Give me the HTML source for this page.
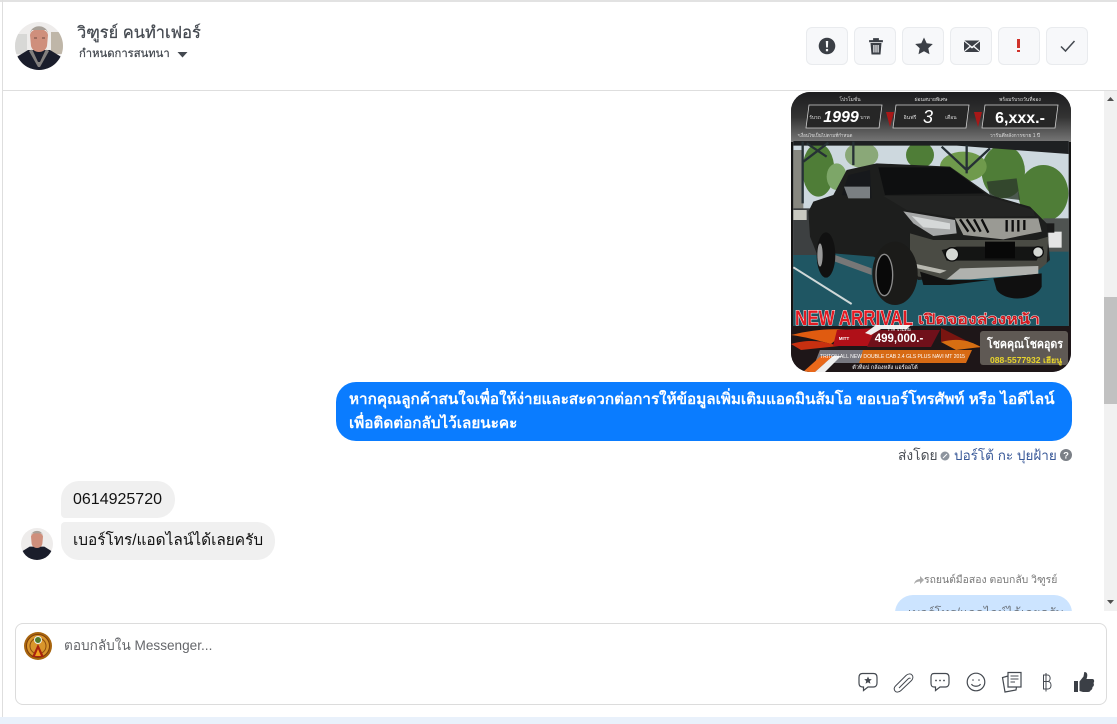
<!DOCTYPE html>
<html><head><meta charset="utf-8"><style>
*{box-sizing:border-box}
html,body{margin:0;padding:0;width:1117px;height:724px;overflow:hidden;background:#fff;font-family:"Liberation Sans","Noto Sans CJK SC",sans-serif}
.a{position:absolute;white-space:nowrap}
.btn{position:absolute;top:27px;width:42px;height:38px;background:#f7f8fa;border:1px solid #e9ebee;border-radius:6px}
.btn svg,.ic{position:absolute}
.b{position:absolute;border-radius:18px;font-size:16px;line-height:24px;white-space:nowrap}
</style></head><body>
<div class="a" style="left:0;top:0;width:1117px;height:2px;background:#e2e2e2"></div>
<div class="a" style="left:2px;top:0;width:1px;height:724px;background:#dedede"></div>
<div class="a" style="left:3px;top:90px;width:1114px;height:1px;background:#dedede"></div>

<svg class="a" style="left:15px;top:22px" width="48" height="48" viewBox="0 0 48 48"><defs><clipPath id="c1"><circle cx="24" cy="24" r="24"/></clipPath></defs><g clip-path="url(#c1)"><rect width="48" height="48" fill="#eeeceb"/><rect x="36" y="10" width="12" height="22" fill="#bfb6a8"/><rect x="0" y="12" width="12" height="20" fill="#d8d8d6"/><path d="M0 44V36L13 28H35L48 36V48H0Z" fill="#1a1d2b"/><path d="M15 13C16 5 32 5 33 13L32 24C30 32 18 32 16 24Z" fill="#cf8f7c"/><path d="M15 11C17 2 31 2 33 11L31 8H17Z" fill="#a8a098"/><path d="M17 27L23 40L25 40L31 27L34 29L25 45H23L14 29Z" fill="#c8c2b4" opacity=".6"/><path d="M19 16H22M27 16H30" stroke="#6e4a40"/></g></svg>

<div class="a" style="left:77px;top:23px;font-size:16.400px;line-height:20px;color:#444950;-webkit-text-stroke:.25px #444950">วิฑูรย์ คนทำเฟอร์</div>
<div class="a" style="left:79px;top:46px;font-size:11.250px;line-height:16px;color:#444950;-webkit-text-stroke:.25px #444950">กำหนดการสนทนา</div>
<svg class="ic" style="left:177px;top:51px" width="11" height="7"><path d="M0.500 1H10.500L5.500 6.500Z" fill="#444950"/></svg>

<div class="btn" style="left:806px"><svg style="left:11px;top:9px" width="18" height="18" viewBox="0 0 18 18"><path fill-rule="evenodd" d="M9 .7A8.300 8.300 0 1 0 9 17.300A8.300 8.300 0 1 0 9 .7Z M7.800 4H10.200L9.900 10.500H8.100Z M7.900 12H10.100V14.200H7.900Z" fill="#3b3f46"/></svg></div>
<div class="btn" style="left:854px"><svg style="left:13px;top:9px" width="16" height="18" viewBox="0 0 16 18"><path d="M1.500 3.500H14.500V4.800H1.500Z M5.500 3.500V1.500H10.500V3.500" fill="#3b3f46" stroke="#3b3f46" stroke-width=".8"/><path fill-rule="evenodd" d="M2.500 6H13.500L12.500 17.500H3.500Z M5.300 8V15.500H6.500V8Z M7.400 8V15.500H8.600V8Z M9.500 8V15.500H10.700V8Z" fill="#3b3f46"/></svg></div>
<div class="btn" style="left:902px"><svg style="left:12px;top:9px" width="18" height="18" viewBox="0 0 18 18"><path d="M9 .5L11.700 6.200L17.800 7L13.300 11.200L14.500 17.300L9 14.300L3.500 17.300L4.700 11.200L.2 7L6.300 6.200Z" fill="#3b3f46"/></svg></div>
<div class="btn" style="left:950px"><svg style="left:12px;top:11px" width="18" height="14" viewBox="0 0 18 14"><path d="M1.500 1.500H16.500L9 7.500Z M1 2.500L6.500 7L1 12Z M17 2.500L11.500 7L17 12Z M1.500 13L7.300 8.200L9 9.500L10.700 8.200L16.500 13Z" fill="#3b3f46"/></svg></div>
<div class="btn" style="left:998px"><div class="a" style="left:18px;top:11px;width:3px;height:9px;background:#d0332b"></div><div class="a" style="left:18px;top:21.500px;width:3px;height:2.500px;background:#d0332b"></div></div>
<div class="btn" style="left:1046px"><svg style="left:12px;top:11px" width="18" height="14" viewBox="0 0 18 14"><path d="M2 7.500L6.500 12L15.500 2" fill="none" stroke="#444950" stroke-width="1.500"/></svg></div>

<svg class="a" style="left:791px;top:92px" width="280" height="280" viewBox="0 0 280 280">
<defs><clipPath id="ci"><rect width="280" height="280" rx="19"/></clipPath><linearGradient id="gh" x1="0" y1="0" x2="0" y2="1"><stop offset="0" stop-color="#1d1d1f"/><stop offset=".5" stop-color="#333"/><stop offset="1" stop-color="#777"/></linearGradient></defs>
<g clip-path="url(#ci)">
<rect width="280" height="280" fill="#141414"/><rect width="280" height="50" fill="url(#gh)"/>
<g fill="#262626" stroke="#d0d0d0" stroke-width=".8"><path d="M18 13H91L88 36H15Z"/><path d="M105 13H178L175 36H102Z"/><path d="M194 13H267L264 36H191Z"/></g>
<path d="M95 20H103L99 35Z M183 20H191L187 35Z" fill="#a81818"/>
<g fill="#ddd" font-size="5" text-anchor="middle"><text x="59" y="9">โปรโมชั่น</text><text x="140" y="9">ผ่อนสบายพิเศษ</text><text x="229" y="9">พร้อมรับรถวันที่จอง</text><text x="24" y="27">รับรถ</text><text x="74" y="27">บาท</text><text x="119" y="27">อินฟรี</text><text x="160" y="27">เดือน</text><text x="34" y="45" font-size="4.500">*เงื่อนไขเป็นไปตามที่กำหนด</text><text x="224" y="45">วารันตีหลังการขาย 1 ปี</text></g>
<text x="50" y="30" fill="#fff" font-size="16" font-weight="700" font-style="italic" text-anchor="middle">1999</text>
<text x="137" y="31" fill="#fff" font-size="18" font-style="italic" text-anchor="middle">3</text>
<text x="229" y="31" fill="#fff" font-size="16" font-weight="700" text-anchor="middle">6,xxx.-</text>

<g transform="translate(-1,48) scale(.33333)">
<rect x="10" y="5" width="826" height="560" fill="#cdd8de"/>
<rect x="10" y="330" width="826" height="235" fill="#1f5663"/>
<g fill="#4f7d37"><ellipse cx="85" cy="90" rx="48" ry="80"/><ellipse cx="390" cy="45" rx="42" ry="40"/><ellipse cx="215" cy="45" rx="50" ry="38" fill="#8aa878"/><ellipse cx="640" cy="95" rx="65" ry="80"/><ellipse cx="760" cy="160" rx="75" ry="85"/><ellipse cx="520" cy="80" rx="70" ry="45" fill="#6f9a4c"/><ellipse cx="140" cy="110" rx="30" ry="40" fill="#7da668"/></g>
<rect x="10" y="30" width="30" height="180" fill="#87877f"/><rect x="10" y="205" width="80" height="140" fill="#3d4041"/><rect x="10" y="210" width="40" height="30" fill="#c8c8c0"/>
<path d="M590 125L680 115L690 180L600 170Z" fill="#2c3a2a" opacity=".8"/>
<rect x="760" y="235" width="76" height="100" fill="#4f5351"/><rect x="775" y="275" width="40" height="48" fill="#e4e4e4"/><rect x="765" y="250" width="28" height="28" fill="#1a1a1a"/>
<path d="M10 3H836V42L500 17H10Z" fill="#1e2022"/>
<g stroke="#263035" fill="none" stroke-width="7"><path d="M38 5V190M190 5V75"/><path d="M40 65L115 8M50 10L110 50M530 15V100M455 20L530 90L600 25"/></g>
<path d="M10 382L185 492" stroke="#cfd8d8" stroke-width="6"/>
<path d="M55 215L70 185L130 165L170 90L260 70L480 80L600 165L720 200L770 250L780 360L740 395L385 420L350 395L250 350L130 340L80 340L60 290Z" fill="#1d1e1d"/>
<path d="M265 82L480 82L585 160L285 165Z" fill="#0e0f10"/>
<path d="M155 165L175 105L240 90L245 175Z" fill="#17191c"/><path d="M162 140H240V175H175Z" fill="#7a7f82"/>
<path d="M280 168H590L730 210L735 228L495 232L350 210Z" fill="#232423"/>
<path d="M340 214L495 240L500 280L430 288L370 250Z" fill="#a6a8a8"/><path d="M365 228L480 250L480 268L400 262Z" fill="#d5d8d8"/>
<path d="M495 235H745L755 275L640 298L520 285Z" fill="#9a9a94"/>
<g stroke="#0d0d0d" stroke-width="7"><path d="M510 238L535 275M530 238L555 275M552 238L572 275M575 238L595 278M650 240V275M668 240V275M685 240V275M703 240V270"/></g>
<path d="M360 280L430 300H740L775 290L770 370L740 395L480 420L385 410L360 370Z" fill="#4a4b44"/>
<path d="M455 330L500 320H760L740 362H470Z" fill="#141514"/><rect x="585" y="305" width="90" height="50" fill="#080808"/>
<circle cx="486" cy="343" r="20" fill="#d5d8d4" stroke="#0c0c0c" stroke-width="4"/><circle cx="744" cy="336" r="16" fill="#d5d8d4" stroke="#0c0c0c" stroke-width="4"/>
<path d="M470 418L510 385L745 378V402L540 418Z" fill="#b0b2ae"/><path d="M370 370L470 392L450 400L370 382Z" fill="#b8b8b0"/>
<path d="M135 345L245 385V405L135 365Z" fill="#777"/>
<ellipse cx="108" cy="345" rx="28" ry="68" fill="#111"/><ellipse cx="90" cy="345" rx="8" ry="35" fill="#999"/>
<ellipse cx="315" cy="400" rx="68" ry="95" fill="#1b1b19"/><ellipse cx="283" cy="405" rx="25" ry="62" fill="#090909" stroke="#8b8b8b" stroke-width="4"/>
<path d="M610 415L755 400V440C740 480 650 490 620 450Z" fill="#101010"/>
<path d="M390 395L470 420H600L480 435H400Z" fill="#111"/>
</g>

<rect x="0" y="234" width="280" height="46" fill="#1e1618"/>
<path d="M0 243C20 238 40 236 56 238L40 252C25 248 15 245 0 243Z" fill="#e05b10"/><path d="M0 252C20 246 35 250 48 254L10 258Z" fill="#c83010"/>
<path d="M150 236L190 256L150 250Z" fill="#7a1510"/><path d="M150 250C170 245 180 250 190 255L165 258Z" fill="#d66e12"/>
<path d="M46 238L90 236L84 254H42Z" fill="#b01018"/><path d="M84 238H149L140 255H76Z" fill="#70101a"/>
<path d="M74 241L85 233H120L116 237H90L80 243Z" fill="#eee"/>
<path d="M29 258H181L175 271H24Z" fill="#d76a14"/><path d="M29 258H72L68 271H24Z" fill="#77777f"/>
<path d="M12 280L30 264H42L24 280Z" fill="#e9681a"/><path d="M24 280L42 264H50L34 280Z" fill="#eee"/>
<rect x="189" y="239" width="88" height="34" rx="3" fill="#5f5954"/>
<text x="4" y="233" fill="#e31b23" stroke="#fff" stroke-width="1" paint-order="stroke" font-size="21" font-weight="700" textLength="118" lengthAdjust="spacingAndGlyphs">NEW ARRIVAL</text>
<text x="127" y="232" fill="#d11a20" stroke="#fff" stroke-width=".8" paint-order="stroke" font-size="14" font-weight="700" textLength="122" lengthAdjust="spacingAndGlyphs">เปิดจองล่วงหน้า</text>
<text x="108" y="239" fill="#fff" font-size="4.500" text-anchor="middle">ราคาเริ่มต้น</text>
<text x="53" y="248" fill="#fff" font-size="4.500" font-weight="700" text-anchor="middle">MITT</text>
<text x="108" y="250" fill="#fff" font-size="11.500" font-weight="700" text-anchor="middle">499,000.-</text>
<text x="196" y="256" fill="#fff" font-size="12" font-weight="700" textLength="76" lengthAdjust="spacingAndGlyphs">โชคคุณโชคอุดร</text>
<text x="199" y="271" fill="#e9d52c" font-size="8" font-weight="700" textLength="72" lengthAdjust="spacingAndGlyphs">088-5577932 เฮียนู</text>
<text x="29" y="266" fill="#fff" font-size="5" textLength="145" lengthAdjust="spacingAndGlyphs">TRITON ALL NEW DOUBLE CAB 2.4 GLS PLUS NAVI MT 2015</text>
<text x="94" y="277" fill="#fff" font-size="5.500" text-anchor="middle">ตัวท็อป กล้องหลัง แอร์ออโต้</text>
</g></svg>

<div class="b" style="left:336px;top:382px;width:736px;height:59px;padding:6px 13px;background:#0a7cff;color:#fff;font-weight:700;font-size:15.250px;border-radius:20px">หากคุณลูกค้าสนใจเพื่อให้ง่ายและสะดวกต่อการให้ข้อมูลเพิ่มเติมแอดมินส้มโอ ขอเบอร์โทรศัพท์ หรือ ไอดีไลน์<br>เพื่อติดต่อกลับไว้เลยนะคะ</div>

<div class="a" style="left:898px;top:447px;font-size:13.800px;line-height:18px;color:#4b4f56">ส่งโดย</div>
<svg class="ic" style="left:940px;top:451px" width="10" height="10"><circle cx="5" cy="5" r="4.500" fill="#8d949e"/><path d="M3 7L7 3" stroke="#fff"/></svg>
<div class="a" style="left:954px;top:447px;font-size:13.500px;line-height:18px;color:#385898">ปอร์โต้ กะ ปุยฝ้าย</div>
<svg class="ic" style="left:1060px;top:449px" width="12" height="12"><circle cx="6" cy="6" r="6" fill="#7b8087"/><text x="6" y="9.500" font-size="9.500" font-weight="700" fill="#fff" text-anchor="middle">?</text></svg>

<div class="b" style="left:61px;top:481px;width:114px;height:37px;padding:7px 12px;background:#f0f0f0;color:#111;border-radius:18px 18px 18px 4px">0614925720</div>
<div class="b" style="left:61px;top:522px;width:214px;height:38px;padding:7px 12px;background:#f0f0f0;color:#111;font-size:15.400px;border-radius:4px 18px 18px 18px">เบอร์โทร/แอดไลน์ได้เลยครับ</div>
<svg class="a" style="left:21px;top:528px" width="32" height="32" viewBox="0 0 48 48"><defs><clipPath id="c2"><circle cx="24" cy="24" r="24"/></clipPath></defs><g clip-path="url(#c2)"><rect width="48" height="48" fill="#eeeceb"/><path d="M0 44V36L13 28H35L48 36V48H0Z" fill="#1a1d2b"/><path d="M15 13C16 5 32 5 33 13L32 24C30 32 18 32 16 24Z" fill="#cf8f7c"/><path d="M15 11C17 2 31 2 33 11L31 8H17Z" fill="#a8a098"/></g></svg>

<svg class="ic" style="left:914px;top:576px" width="10" height="9"><path d="M0 8C1 4 4 3 6 3V0L10 4L6 8V5.500C4 5.500 2 6 0 8Z" fill="#aaa"/></svg>
<div class="a" style="left:924px;top:573px;font-size:10.400px;line-height:16px;color:#777">รถยนต์มือสอง ตอบกลับ วิฑูรย์</div>
<div class="a" style="left:895px;top:595px;width:177px;height:16px;overflow:hidden"><div class="b" style="left:0;top:0;width:177px;height:36px;padding:6px 13px;background:#cce4ff;color:#6f7780;font-size:12.600px;border-radius:18px">เบอร์โทร/แอดไลน์ได้เลยครับ</div></div>

<div class="a" style="left:1104px;top:91px;width:13px;height:520px;background:#f1f1f1"></div>
<div class="a" style="left:1104px;top:297px;width:13px;height:107px;background:#c1c1c1"></div>
<svg class="ic" style="left:1106px;top:96px" width="9" height="6"><path d="M4.500 1L8 5H1Z" fill="#505050"/></svg>
<svg class="ic" style="left:1106px;top:599px" width="9" height="6"><path d="M1 1H8L4.500 5Z" fill="#505050"/></svg>

<div class="a" style="left:15px;top:623px;width:1092px;height:82px;border:1px solid #dcdcdc;border-radius:8px;background:#fff"></div>
<svg class="a" style="left:24px;top:632px" width="28" height="28" viewBox="0 0 28 28"><circle cx="14" cy="14" r="14" fill="#a8650f"/><circle cx="14" cy="14" r="11.500" fill="#d9962c" stroke="#7d3d0a"/><circle cx="14" cy="14" r="8" fill="none" stroke="#8e4e10"/><circle cx="14" cy="8" r="3.500" fill="#4f7a2a" stroke="#eee"/><path d="M14 12L20 25H8Z" fill="#a8230f"/><path d="M14 17L17 24H11Z" fill="#f0a020"/></svg>
<div class="a" style="left:64px;top:637px;font-size:13.600px;line-height:18px;color:#65676b">ตอบกลับใน Messenger...</div>

<svg class="a" style="left:856px;top:670px" width="240" height="26" viewBox="0 0 240 26" fill="none" stroke="#444950" stroke-width="1.200">
<path d="M6.500 3.500H17.500C20 3.500 21 5 21 7.500V13C21 15.500 19.500 17 17.500 17H12L7.500 20.500V17H6.500C4 17 3 15.500 3 13V7.500C3 5 4 3.500 6.500 3.500Z"/>
<path d="M12 6.500L13.100 9L15.800 9.300L13.800 11L14.400 13.700L12 12.300L9.600 13.700L10.200 11L8.200 9.300L10.900 9Z" fill="#444950" stroke="none"/>
<path d="M40 15.500L50 5.500C52 3.500 55 3.500 56 5C57.500 6.500 57 9 55.500 10.500L45 20.500C43 22.500 40 22.500 39 21C38 19.500 38 17.500 39.500 16L49 6.500M43 18L52 9C53 8 54 8 54.500 8.500" stroke-width="1"/>
<path d="M78 3.500H89.500C92 3.500 93 5 93 7.500V13C93 15.500 91.500 17 89.500 17H84L79.500 20.500V17H78C75.500 17 75 15.500 75 13V7.500C75 5 75.500 3.500 78 3.500Z"/>
<circle cx="80" cy="10.500" r=".9" fill="#444950" stroke="none"/><circle cx="84" cy="10.500" r=".9" fill="#444950" stroke="none"/><circle cx="88" cy="10.500" r=".9" fill="#444950" stroke="none"/>
<circle cx="120" cy="12" r="8.800"/><circle cx="117" cy="10" r=".8" fill="#444950" stroke="none"/><circle cx="123" cy="10" r=".8" fill="#444950" stroke="none"/><path d="M115.500 14C117 17 123 17 124.500 14"/>
<path d="M152 2.500H165V17H152Z"/><path d="M154.500 6H162.500M154.500 9H162.500M154.500 12H159" stroke-width="1"/><path d="M152 6L146.500 7.500L149 22L160 20L160.500 17"/>
<path d="M190 3V21.500M187.500 5H191.500C195 5 195 11.500 191.500 11.500H187.500V5ZM187.500 11.500H192C196 11.500 196 19 192 19H187.500V11.500Z" stroke-width="1"/>
<path d="M218 11H222V22H218Z M223.500 11.500L227.500 6.500L228.300 2C231.500 2 232 5 230.500 9H236.500C238.500 9 238.500 12 237.500 13C238.500 15 237.500 16.500 236.500 17C236.500 19 235.500 20 234.500 20.500C234 21.700 233 22 232 22H227L223.500 21Z" fill="#3b3f46" stroke="none"/>
</svg>

<div class="a" style="left:0;top:717px;width:1117px;height:7px;background:#e9f1fb"></div>
</body></html>
